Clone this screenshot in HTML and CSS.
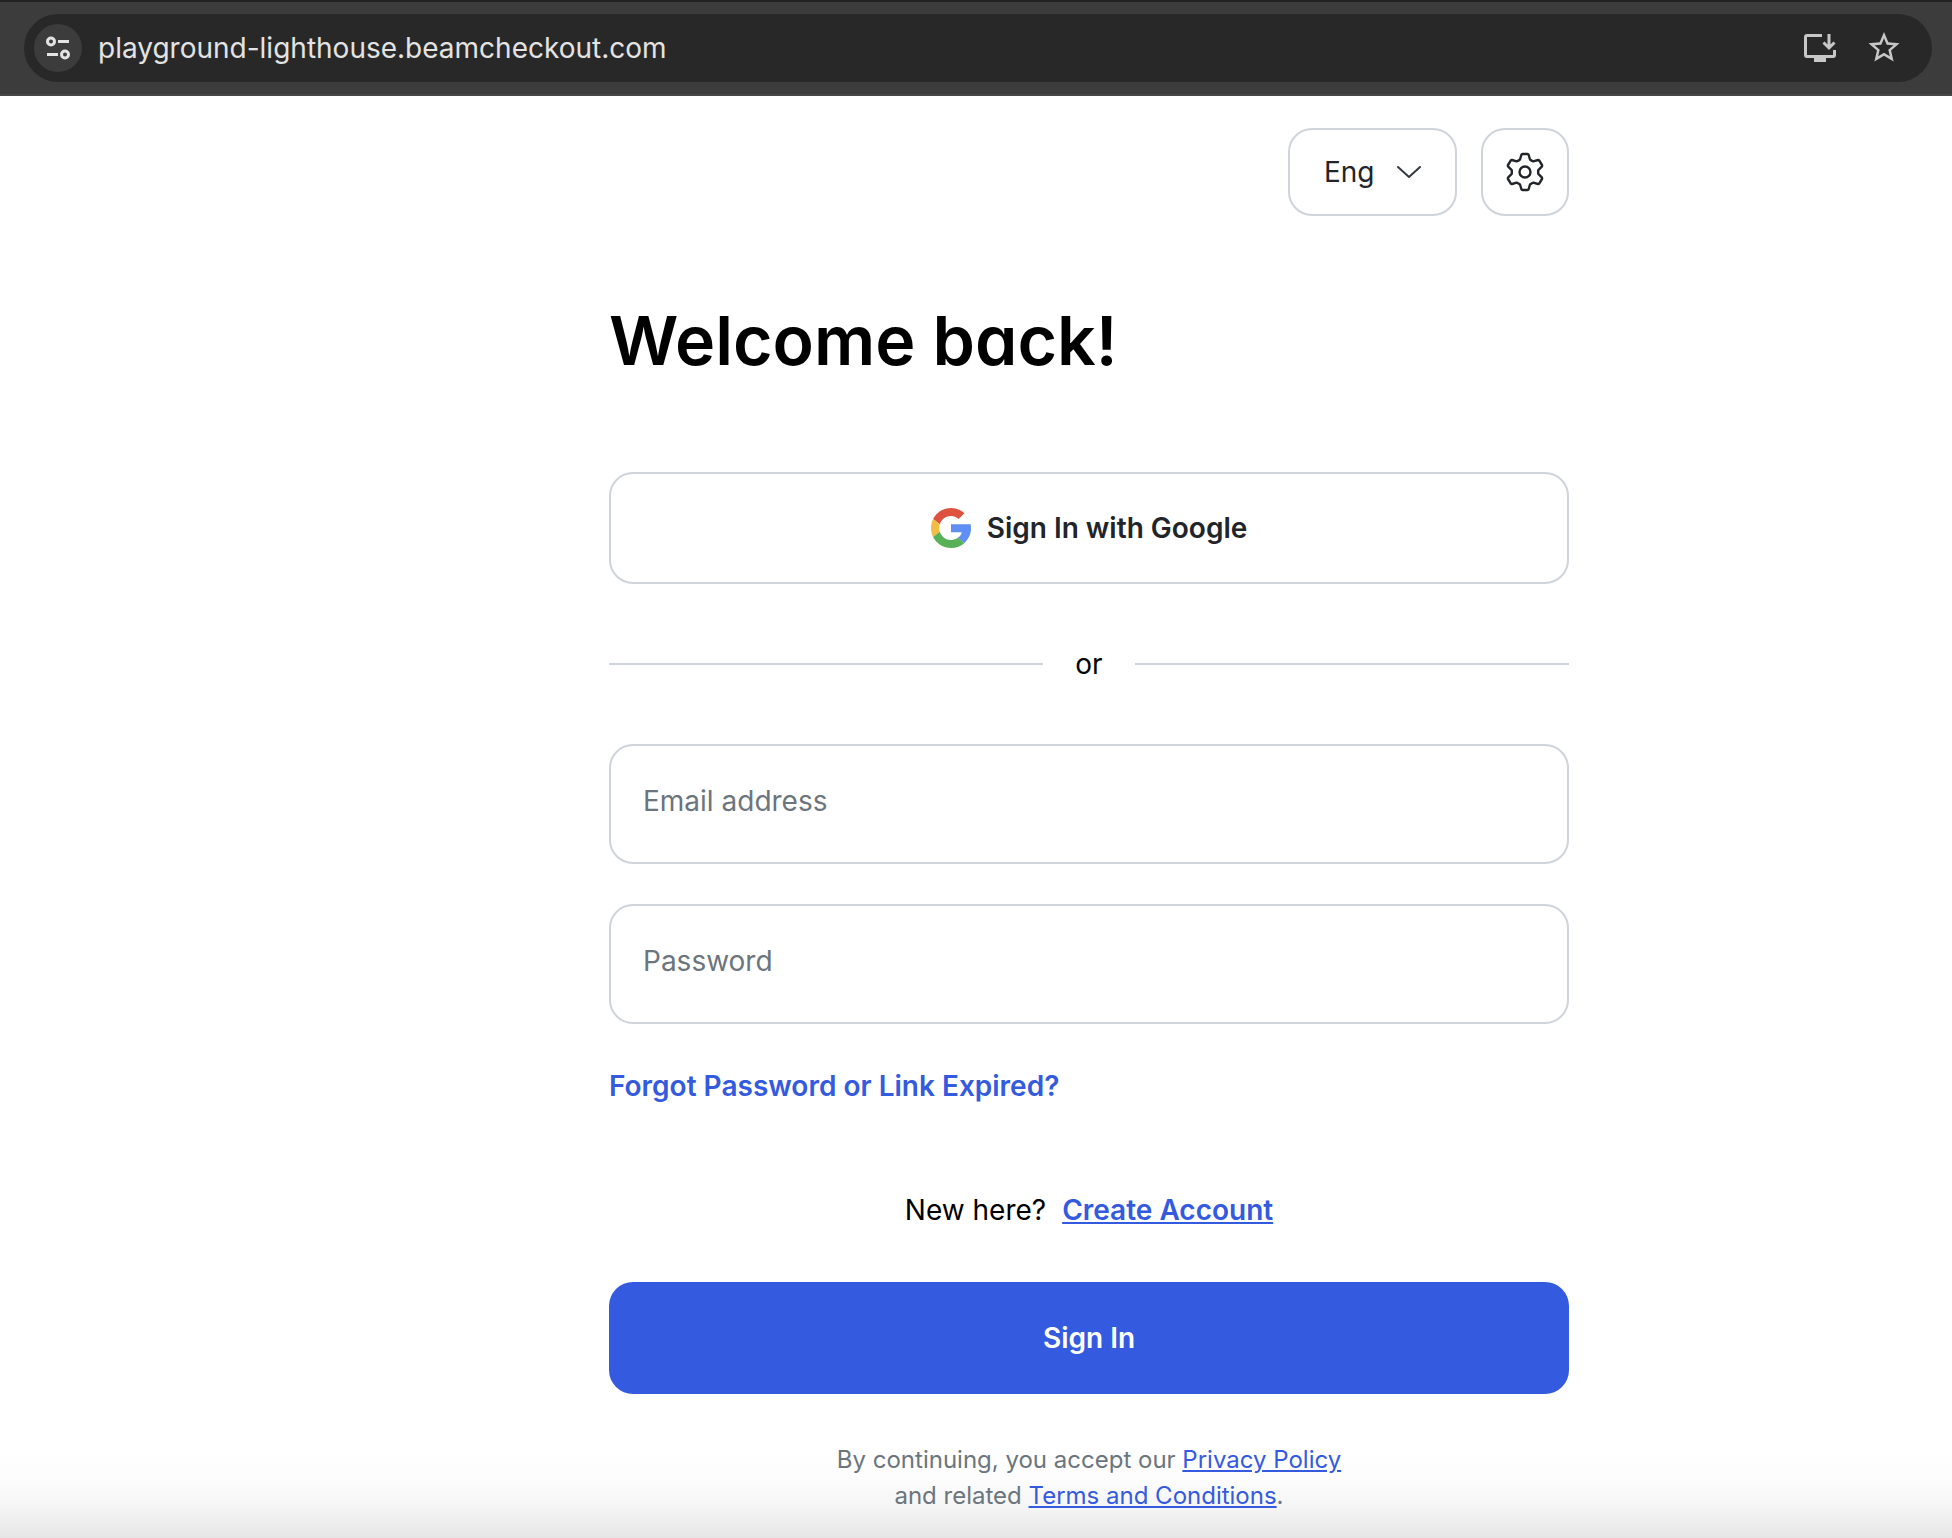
FILE: index.html
```html
<!DOCTYPE html>
<html lang="en">
<head>
  <meta charset="UTF-8" />
  <meta name="viewport" content="width=device-width, initial-scale=1.0"/>
  <title>Sign In</title>
  <link rel="stylesheet" href="styles.css">
</head>
<body>
  <header class="toolbar">
    <div class="address-bar">
      <button class="site-info" aria-label="Site information">
        <svg width="28" height="28" viewBox="0 0 28 28" fill="none" stroke="#e3e3e3" stroke-width="3">
          <circle cx="7" cy="7.500" r="3.500"/>
          <path d="M14 7.500h11M3 20.500h11"/>
          <circle cx="21" cy="20.500" r="3.500"/>
        </svg>
      </button>
      <input class="url" type="text" aria-label="Address" value="playground-lighthouse.beamcheckout.com" />
      <button class="bar-button" aria-label="Install app">
        <svg width="32" height="32" viewBox="0 0 32 32" fill="none" stroke="#c7c7c7" stroke-width="3">
          <path d="M18 3.500H3q-1.500 0-1.500 1.500v18q0 1.500 1.500 1.500h26q1.500 0 1.500-1.500v-5M25 2v14M19.500 10.500l5.500 5.500 5.500-5.500"/>
          <path d="M10 26h12v4H10z" fill="#c7c7c7" stroke="none"/>
        </svg>
      </button>
      <button class="bar-button" aria-label="Bookmark this page">
        <svg width="32" height="32" viewBox="1.700 2 20.600 20.600" fill="#c7c7c7">
          <path d="M22 9.240l-7.190-.62L12 2 9.190 8.630 2 9.240l5.460 4.730L5.820 21 12 17.270 18.180 21l-1.630-7.030L22 9.240zM12 15.400l-3.760 2.270 1-4.280-3.320-2.880 4.380-.38L12 6.100l1.710 4.040 4.380.38-3.320 2.880 1 4.280L12 15.400z"/>
        </svg>
      </button>
    </div>
  </header>

  <main class="page">
    <div class="login">
      <div class="top-actions">
        <label class="language">
          <select aria-label="Language">
            <option>Eng</option>
          </select>
          <svg width="24" height="14" viewBox="0 0 24 14" fill="none" stroke="#343a40" stroke-width="2" stroke-linecap="round" stroke-linejoin="round">
            <path d="M1 2l11 10L23 2"/>
          </svg>
        </label>
        <button class="settings" aria-label="Settings">
          <svg width="40" height="40" viewBox="-20 -20 40 40" fill="none" stroke="#212529" stroke-width="2.400" stroke-linejoin="round">
            <circle r="5.500"/>
            <path d="M-3.500-17.500Q-3-18-2.500-18h5Q3-18 3.500-17.500L5-12.500Q6.500-11.300 8.300-10.600L13-12Q13.800-12 14.300-11.400L17-7Q17.300-6 16.800-5.400L13.300-1.900Q13 0 13.300 1.900L16.800 5.400Q17.300 6 17 7L14.300 11.400Q13.800 12 13 12L8.300 10.600Q6.500 11.300 5 12.500L3.500 17.500Q3 18 2.500 18h-5Q-3 18-3.500 17.500L-5 12.500Q-6.500 11.300-8.300 10.600L-13 12Q-13.800 12-14.300 11.400L-17 7Q-17.300 6-16.800 5.400L-13.300 1.900Q-13 0-13.300-1.900L-16.800-5.400Q-17.300-6-17-7L-14.300-11.400Q-13.800-12-13-12L-8.300-10.600Q-6.500-11.300-5-12.500z"/>
          </svg>
        </button>
      </div>

      <h1>Welcome back!</h1>

      <form class="login-form">
        <button type="button" class="button google">
          <svg width="40" height="40" viewBox="0 0 48 48">
            <path fill="#de5240" d="M24 9.500c3.540 0 6.710 1.220 9.210 3.600l6.850-6.850C35.900 2.380 30.470 0 24 0 14.620 0 6.510 5.380 2.560 13.220l7.980 6.190C12.430 13.720 17.740 9.500 24 9.500z"/>
            <path fill="#5f8ff5" d="M48 24.550c0-1.570-.15-3.590-.38-5.050H24v9.520h12.940c-.58 2.960-2.260 4.980-4.780 6.680l7.730 6.490c4.510-4.180 8.110-10.360 8.110-17.640z"/>
            <path fill="#f2bd42" d="M10.530 28.590c-.48-1.450-.76-2.990-.76-4.590s.27-3.140.76-4.590l-7.980-6.190C.92 16.460 0 20.120 0 24s.92 7.540 2.560 10.780l7.970-6.190z"/>
            <path fill="#58b156" d="M24 48c6.480 0 11.930-2.130 15.890-5.810l-7.730-6.490c-2.150 1.450-4.920 2.800-8.160 2.800-6.260 0-11.570-4.220-13.470-9.910l-7.980 6.190C6.510 42.620 14.620 48 24 48z"/>
          </svg>
          <span>Sign In with Google</span>
        </button>

        <div class="divider">or</div>

        <input class="field" type="email" placeholder="Email address" aria-label="Email address" />
        <input class="field" type="password" placeholder="Password" aria-label="Password" />

        <a class="forgot" href="#">Forgot Password or Link Expired?</a>

        <p class="signup">New here? <a href="#">Create Account</a></p>

        <button type="submit" class="button primary">Sign In</button>
      </form>

      <p class="terms">
        By continuing, you accept our <a href="#">Privacy Policy</a><br>
        and related <a href="#">Terms and Conditions</a>.
      </p>
    </div>
  </main>
</body>
</html>
```

FILE: styles.css
```css
* {
  box-sizing: border-box;
}

body {
  margin: 0;
  min-height: 100vh;
  display: flex;
  flex-direction: column;
  font-family: Inter, sans-serif;
  font-size: 28px;
  line-height: 40px;
  color: #000;
  background: #fff;
}

button,
input,
select {
  font: inherit;
  color: inherit;
}

button {
  padding: 0;
  border: none;
  background: none;
  cursor: pointer;
}

svg {
  display: block;
}

/* browser bar */
.toolbar {
  padding: 12px 20px 12px 24px;
  background: #3c3c3c;
  border-top: 2px solid #222;
  border-bottom: 2px solid #474547;
}

.address-bar {
  display: flex;
  align-items: center;
  height: 68px;
  padding: 0 32px 0 10px;
  border-radius: 34px;
  background: #282828;
}

.site-info {
  display: grid;
  place-items: center;
  width: 48px;
  height: 48px;
  border-radius: 50%;
  background: #3c3c3c;
}

.url {
  flex: 1;
  min-width: 0;
  padding: 0 16px;
  border: none;
  outline: none;
  background: transparent;
  color: #e3e3e3;
}

.bar-button {
  margin-left: 32px;
}

/* sign in page */
.page {
  flex: 1;
  padding: 32px 0 20px 226px;
  background: linear-gradient(to top, #e6e6e6, #f4f4f4 28px, #fcfcfc 56px, #fff 88px);
}

.login {
  max-width: 960px;
  margin: 0 auto;
}

.top-actions {
  display: flex;
  justify-content: flex-end;
  gap: 24px;
}

.language {
  display: grid;
  align-items: center;
  color: #212529;
}

.language select,
.language svg {
  grid-area: 1 / 1;
}

.language select {
  height: 88px;
  padding: 0 80px 0 34px;
  border: 2px solid #ced4da;
  border-radius: 24px;
  background: transparent;
  appearance: none;
}

.language svg {
  justify-self: end;
  margin-right: 36px;
  pointer-events: none;
}

.settings {
  display: grid;
  place-items: center;
  width: 88px;
  height: 88px;
  border: 2px solid #ced4da;
  border-radius: 24px;
}

h1 {
  margin: 84px 0 92px;
  font-size: 68px;
  line-height: 80px;
  font-weight: 600;
  font-feature-settings: "cv11";
}

.login-form {
  display: flex;
  flex-direction: column;
}

.button {
  display: flex;
  align-items: center;
  justify-content: center;
  gap: 16px;
  height: 112px;
  border-radius: 24px;
  font-weight: 600;
}

.google {
  border: 2px solid #ced4da;
  color: #212529;
}

.divider {
  display: flex;
  align-items: center;
  gap: 32px;
  margin: 60px 0;
}

.divider::before,
.divider::after {
  content: "";
  flex: 1;
  height: 2px;
  background: #ced4da;
}

.field {
  height: 120px;
  margin-bottom: 40px;
  padding: 0 32px 6px;
  border: 2px solid #ced4da;
  border-radius: 24px;
  background: transparent;
}

.field::placeholder {
  color: #6c757d;
  opacity: 1;
}

a {
  color: #345ae0;
}

.forgot {
  align-self: flex-start;
  margin-top: 2px;
  font-weight: 600;
  text-decoration: none;
}

.signup {
  display: flex;
  justify-content: center;
  gap: 16px;
  margin: 84px 0 52px;
}

.signup a {
  font-weight: 600;
}

.primary {
  background: #345ae0;
  color: #fff;
}

.terms {
  margin: 48px 0 0;
  font-size: 24px;
  line-height: 36px;
  text-align: center;
  color: #6c757d;
}
```
